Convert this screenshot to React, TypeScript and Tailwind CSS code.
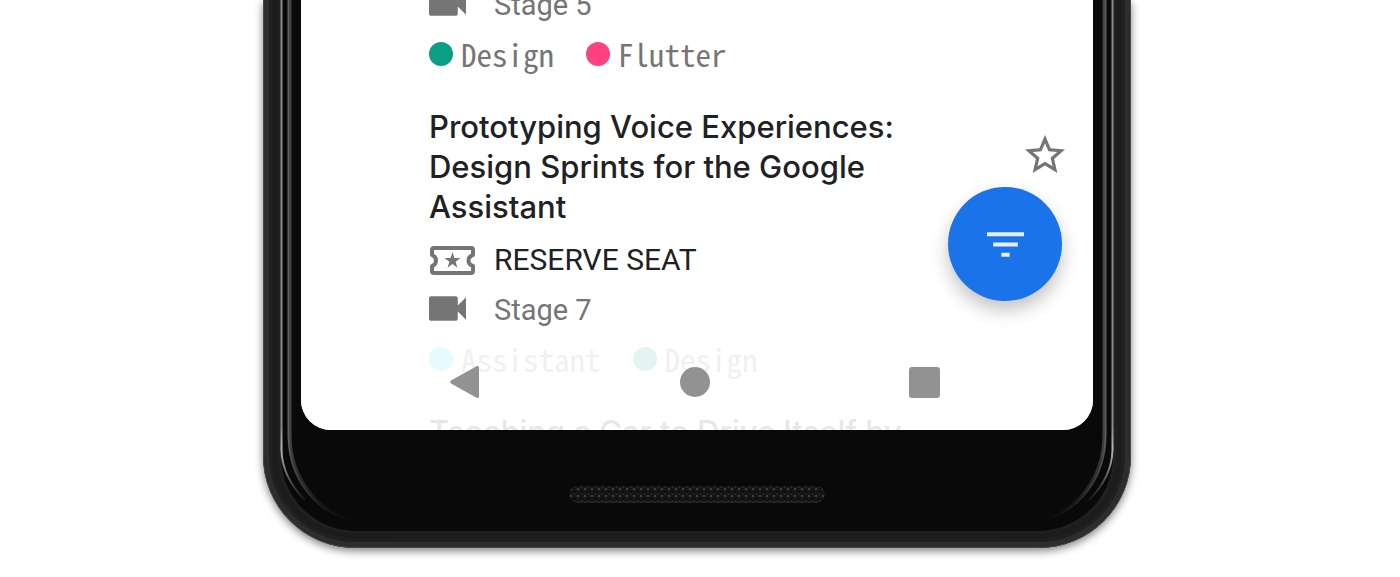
import type { ReactNode } from "react";
import { MdStarBorder } from "react-icons/md";

function VideoIcon() {
  return (
    <svg viewBox="3 6 18 12" className="mb-1 h-[25px] w-[37px]" fill="currentColor" aria-hidden="true">
      <path d="M17 10.5V7c0-.55-.45-1-1-1H4c-.55 0-1 .45-1 1v10c0 .55.45 1 1 1h12c.55 0 1-.45 1-1v-3.5l4 4v-11l-4 4z" />
    </svg>
  );
}

function TicketIcon() {
  return (
    <svg viewBox="0 0 45 29" className="ml-px h-[29px] w-[45px]" aria-hidden="true">
      <path
        d="M4 2H41Q43 2 43 4V9Q38.500 10.500 38.500 14.500Q38.500 18.500 43 20V25Q43 27 41 27H4Q2 27 2 25V20Q6 18.500 6 14.500Q6 10.500 2 9V4Q2 2 4 2Z"
        fill="none"
        stroke="currentColor"
        strokeWidth="4"
        strokeLinejoin="round"
      />
      <path
        d="M22.500 6L24.400 12H30.500L25.600 15.700L27.400 21.700L22.500 18L17.600 21.700L19.400 15.700L14.500 12H20.600Z"
        fill="currentColor"
      />
    </svg>
  );
}

function Detail({ icon, children }: { icon: ReactNode; children: ReactNode }) {
  return (
    <div className="flex h-[50px] items-center text-[29px] text-[#757575]">
      <span className="w-[65px] shrink-0">{icon}</span>
      {children}
    </div>
  );
}

function Tag({ color, label }: { color: string; label: string }) {
  return (
    <li className="flex items-center gap-2">
      <span className={`mb-0.5 size-6 rounded-full ${color}`} />
      <span className="pb-1">{label}</span>
    </li>
  );
}

function Tags({ children }: { children: ReactNode }) {
  return (
    <ul className="flex h-[50px] items-center gap-8 font-['Noto_Sans_Mono_CJK_SC','DejaVu_Sans_Mono',monospace] text-[31px] leading-none text-[#757575]">
      {children}
    </ul>
  );
}

function Edge({ side }: { side: "left" | "right" }) {
  const a = `${side}-rim`;
  const b = `${side}-bevel`;
  const c = `${side}-glint`;
  return (
    <svg
      viewBox="0 0 130 548"
      className={
        side === "left"
          ? "absolute bottom-0 left-0 h-[548px] w-[130px]"
          : "absolute right-0 bottom-0 h-[548px] w-[130px] -scale-x-100"
      }
      fill="none"
      aria-hidden="true"
    >
      <defs>
        <linearGradient id={a} gradientUnits="userSpaceOnUse" x1="0" y1="440" x2="50" y2="510">
          <stop offset="0" stopColor="#8b8b8b" />
          <stop offset=".2" stopColor="#b5b5b5" />
          <stop offset=".55" stopColor="#555" />
          <stop offset="1" stopColor="#222" stopOpacity="0" />
        </linearGradient>
        <linearGradient id={b} gradientUnits="userSpaceOnUse" x1="25" y1="440" x2="90" y2="520">
          <stop offset="0" stopColor="#414141" />
          <stop offset=".5" stopColor="#24242a" />
          <stop offset="1" stopColor="#090909" stopOpacity="0" />
        </linearGradient>
        <linearGradient id={c} gradientUnits="userSpaceOnUse" x1="25" y1="440" x2="95" y2="525">
          <stop offset="0" stopColor="#5d5d5f" />
          <stop offset="1" stopColor="#222" stopOpacity="0" />
        </linearGradient>
      </defs>
      <path d="M.5 0V456A91.500 91.500 0 0 0 92 547.500H130" stroke="#484848" />
      <path d="M3.500 0V456A88.500 88.500 0 0 0 92 544.500H130" stroke="#2d2d2d" strokeWidth="5" />
      <path d="M12 0V456A80 80 0 0 0 92 536H130" stroke="#1c1c1c" strokeWidth="5" />
      <path d="M18.500 0V450C19 468 27 485 42 500" stroke={`url(#${a})`} strokeWidth="2" />
      <path d="M26.500 0V436C27 478 53 512 92 521" stroke={`url(#${b})`} strokeWidth="4" />
      <path d="M25.500 0V436C26 479 52 513 92 521" stroke={`url(#${c})`} strokeWidth="1.500" />
    </svg>
  );
}

function Speaker() {
  return (
    <svg className="h-[17px] w-[256px] rounded-full" aria-hidden="true">
      <defs>
        <pattern id="mesh" width="7" height="7" patternUnits="userSpaceOnUse">
          <rect width="7" height="7" fill="#141414" />
          <circle cx="2" cy="3" r="1.300" fill="#3c3c3c" />
          <circle cx="5.500" cy="6" r="1" fill="#050505" />
          <circle cx="5.500" cy="1" r=".9" fill="#2c2c2c" />
        </pattern>
      </defs>
      <rect width="100%" height="17" rx="8" fill="url(#mesh)" />
      <path d="M8 16H248" stroke="#262626" />
    </svg>
  );
}

const titleClass =
  "font-['Inter','Lato',sans-serif] text-[31px] leading-10 font-medium text-[#202124]";

export default function App() {
  return (
    <main className="overflow-hidden bg-white pr-1.5 pb-7 font-['Roboto',sans-serif] leading-none">
      <div className="relative mx-auto max-w-[868px] rounded-b-[92px] bg-[#202020] px-[18px] shadow-[0_3px_9px_rgba(0,0,0,0.5)]">
        <div className="rounded-b-[75px] bg-[#090909] px-5">
          <section className="relative z-10 overflow-hidden rounded-b-[30px] bg-white">
            <article className="-mt-5 pb-[27px] pl-32">
              <Detail icon={<VideoIcon />}>Stage 5</Detail>
              <Tags>
                <Tag color="bg-[#089f86]" label="Design" />
                <Tag color="bg-[#ff4081]" label="Flutter" />
              </Tags>
            </article>

            <article className="pb-[27px] pl-32">
              <div className="flex items-start justify-between pr-6 pb-2">
                <h2 className={`max-w-[520px] ${titleClass}`}>
                  Prototyping Voice Experiences: Design Sprints for the Google Assistant
                </h2>
                <button type="button" aria-label="Star this session" className="mt-6 shrink-0 text-[#757575]">
                  <MdStarBorder className="size-12" />
                </button>
              </div>
              <Detail icon={<TicketIcon />}>
                <button type="button" className="text-[30px] text-[#202124]">
                  RESERVE SEAT
                </button>
              </Detail>
              <Detail icon={<VideoIcon />}>Stage 7</Detail>
              <Tags>
                <Tag color="bg-[#18d8fd]" label="Assistant" />
                <Tag color="bg-[#089f86]" label="Design" />
              </Tags>
            </article>

            <article className="max-h-[18px] overflow-hidden pl-32">
              <h2 className={titleClass}>Teaching a Car to Drive Itself by</h2>
            </article>

            <nav className="absolute inset-x-0 bottom-0 flex h-24 items-center justify-between bg-white/89 pr-[153px] pl-[149px] text-[#929292]">
              <button type="button" aria-label="Back">
                <svg viewBox="0 0 30 34" className="h-[34px] w-[30px]" fill="currentColor" aria-hidden="true">
                  <path d="M27 1L1 15.500Q-.5 17 1 18.500L27 33Q29 33.500 29 31.500V2.500Q29 .5 27 1Z" />
                </svg>
              </button>
              <button type="button" aria-label="Home" className="size-[30px] rounded-full bg-[#929292]" />
              <button type="button" aria-label="Recent apps" className="size-[31px] rounded-[3px] bg-[#929292]" />
            </nav>

            <button
              type="button"
              aria-label="Filter sessions"
              className="absolute top-[187px] right-[31px] flex size-[114px] items-center justify-center rounded-full bg-[#1a73e8] text-[#e8f0fe] shadow-[0_9px_18px_rgba(0,0,0,0.24)]"
            >
              <svg viewBox="3 6 18 12" className="h-[25px] w-[37px]" fill="currentColor" aria-hidden="true">
                <path d="M10 18h4v-2h-4v2zM3 6v2h18V6H3zm3 7h12v-2H6v2z" />
              </svg>
            </button>
          </section>

          <footer className="flex justify-center pt-14 pb-7">
            <Speaker />
          </footer>
        </div>
        <div className="mx-28 flex h-[17px] flex-col">
          <div className="mt-[2px] h-[5px] bg-[#1c1c1c]" />
          <div className="mt-[4px] h-[5px] bg-[#2d2d2d]" />
          <div className="h-px bg-[#484848]" />
        </div>
        <Edge side="left" />
        <Edge side="right" />
      </div>
    </main>
  );
}
